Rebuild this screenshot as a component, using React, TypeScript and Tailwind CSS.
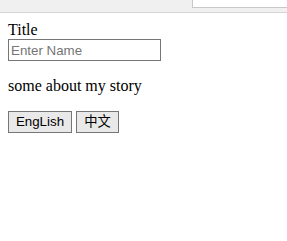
import React from "react";

const App = () => {
  return (
    <div className="min-h-screen bg-white text-black">
      <div className="h-[13px] bg-[#f0f0f0] border-b border-[#d4d4d4] flex justify-end">
        <div className="w-[95px] h-[8px] bg-white border-l border-b border-[#c8c8c8]" />
      </div>
      <div
        className="p-2 text-base leading-[18px]"
        style={{ fontFamily: '"Liberation Serif", "Times New Roman", serif' }}
      >
        <div>Title</div>
        <input
          placeholder="Enter Name"
          className="w-[153px] h-[22px] border border-[#767676] px-[2px] text-[13.33px] placeholder:text-[#757575] outline-none"
          style={{ fontFamily: '"Liberation Sans", Arial, sans-serif' }}
        />
        <p className="my-4">some about my story</p>
        <div className="flex gap-1">
          <button
            className="h-[22px] w-[64px] bg-[#e9e9e9] border border-[#767676] text-[13.33px]"
            style={{ fontFamily: '"Liberation Sans", Arial, sans-serif' }}
          >
            EngLish
          </button>
          <button
            className="h-[22px] w-[43px] bg-[#e9e9e9] border border-[#767676] text-[13.33px]"
            style={{ fontFamily: '"Liberation Sans", Arial, "Noto Sans CJK SC", sans-serif' }}
          >
            中文
          </button>
        </div>
      </div>
    </div>
  );
};

export default App;
